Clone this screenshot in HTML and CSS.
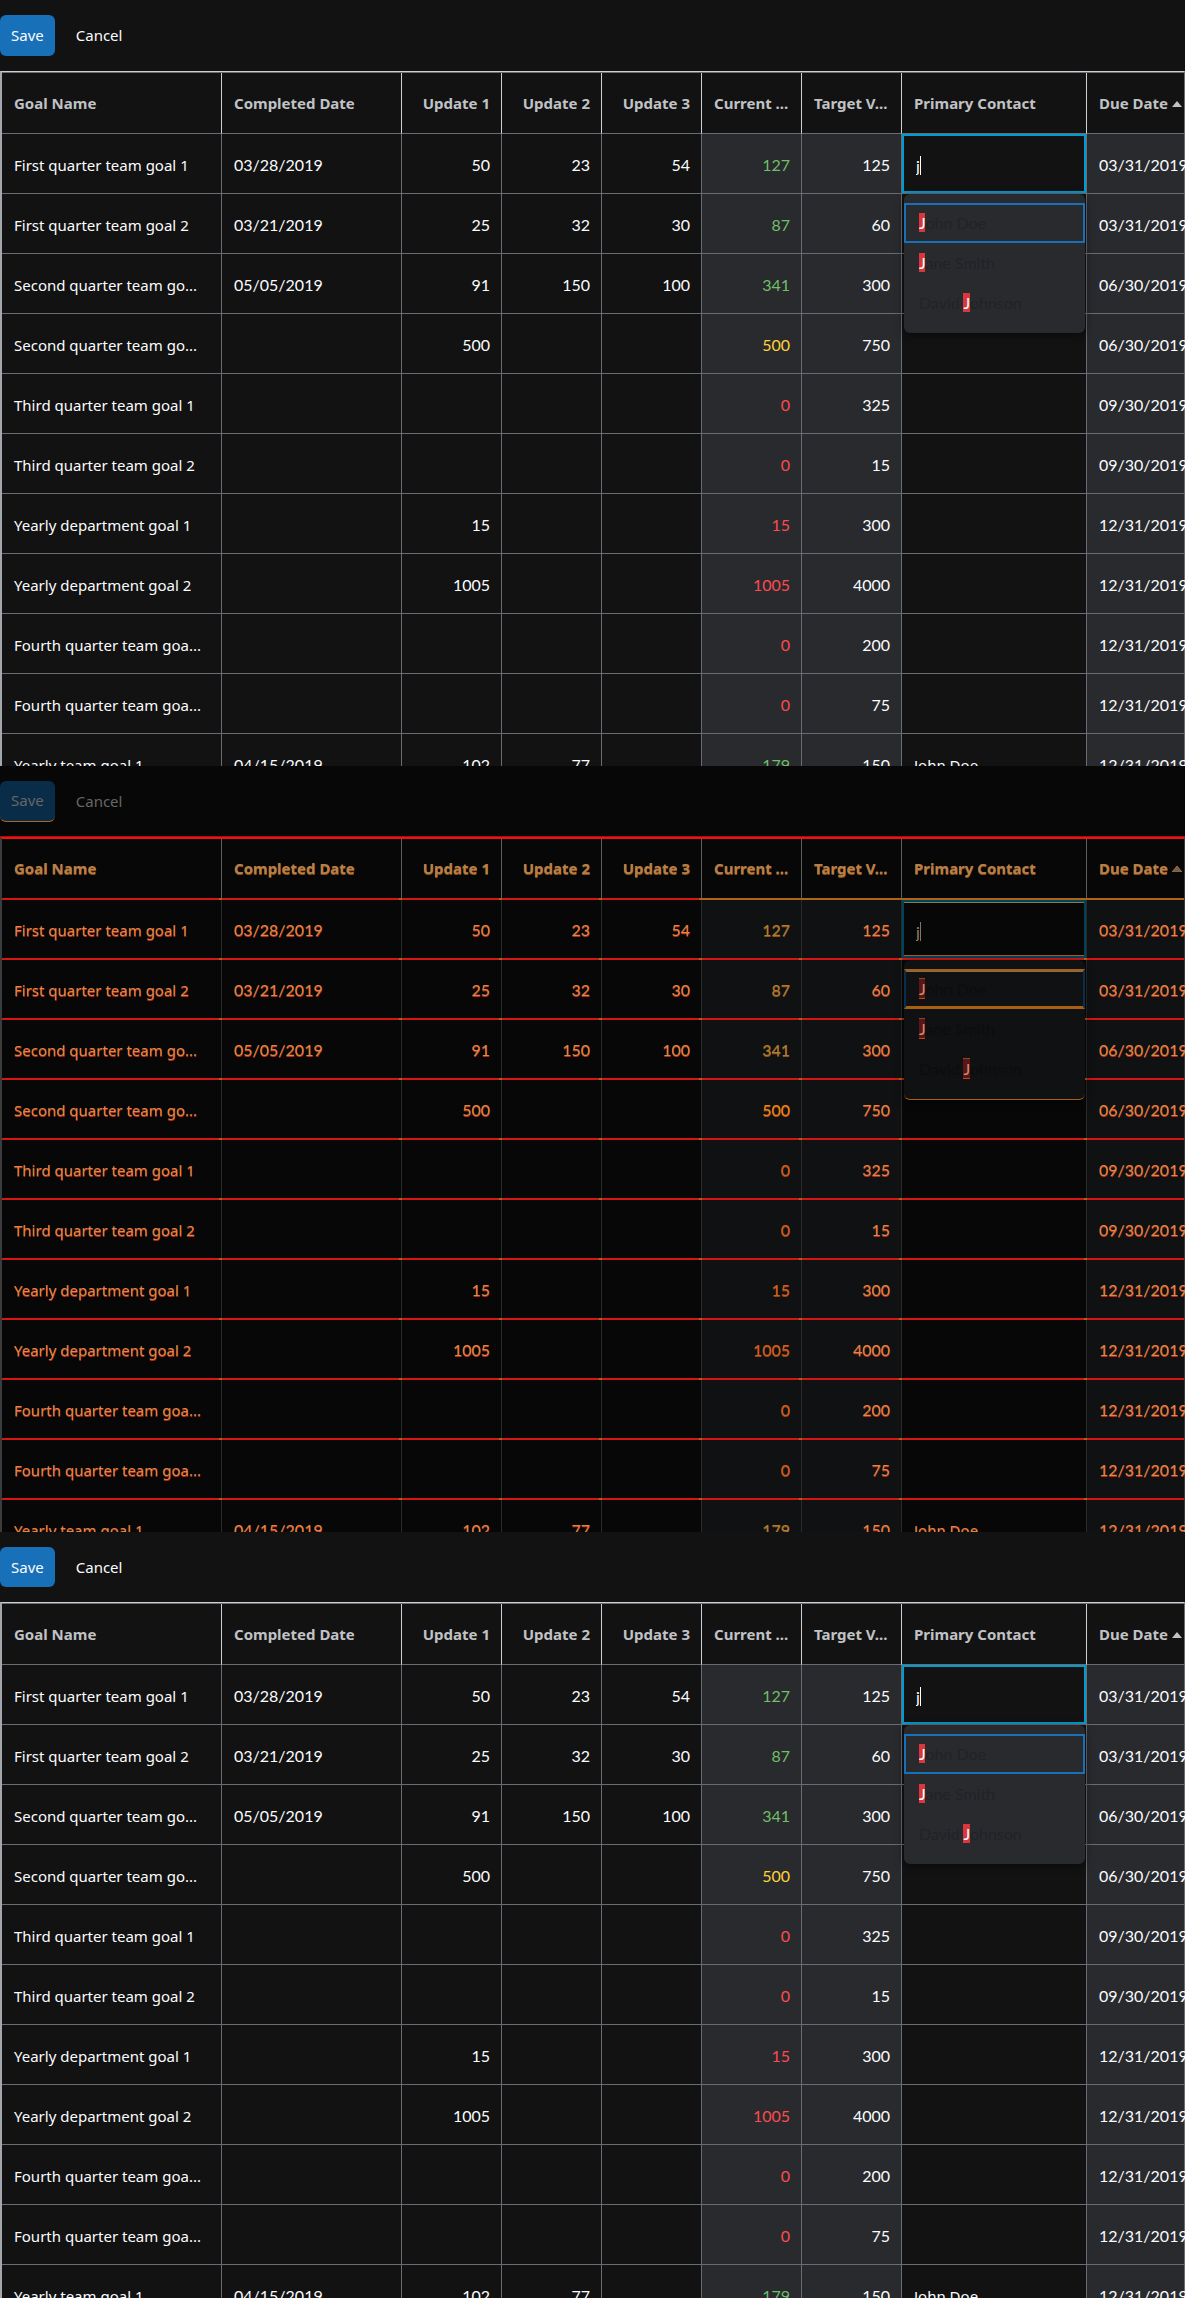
FILE: index.html
```
<!DOCTYPE html>
<html lang="en">
<head>
<meta charset="utf-8">
<title>Goals</title>
<link rel="stylesheet" href="styles.css">
</head>
<body>
<template id="panel-template">
<section class="panel">
  <div class="toolbar">
    <button class="btn btn-primary" type="button">Save</button>
    <button class="btn btn-link" type="button">Cancel</button>
  </div>
  <table class="grid">
    <colgroup>
      <col class="col-name"><col class="col-date"><col class="col-num"><col class="col-num"><col class="col-num"><col class="col-num"><col class="col-num"><col class="col-contact"><col>
    </colgroup>
    <thead>
      <tr>
        <th>Goal Name</th><th>Completed Date</th><th class="num">Update 1</th><th class="num">Update 2</th><th class="num">Update 3</th><th class="over-locked">Current ...</th><th class="over-locked">Target V...</th><th class="over-locked">Primary Contact</th><th class="over-locked due">Due Date <svg class="sort" viewBox="0 0 10 6" aria-hidden="true"><path d="M0 6 5 0l5 6z"/></svg></th>
      </tr>
    </thead>
    <tbody></tbody>
  </table>
</section>
</template>
<main class="panels"></main>
<script src="grid.js"></script>
</body>
</html>
```
FILE: grid.js
```
const rows = [
  ['First quarter team goal 1', '03/28/2019', 50, 23, 54, 127, 125, '', '03/31/2019', 'good'],
  ['First quarter team goal 2', '03/21/2019', 25, 32, 30, 87, 60, '', '03/31/2019', 'good'],
  ['Second quarter team go...', '05/05/2019', 91, 150, 100, 341, 300, '', '06/30/2019', 'good'],
  ['Second quarter team go...', '', 500, '', '', 500, 750, '', '06/30/2019', 'warn'],
  ['Third quarter team goal 1', '', '', '', '', 0, 325, '', '09/30/2019', 'bad'],
  ['Third quarter team goal 2', '', '', '', '', 0, 15, '', '09/30/2019', 'bad'],
  ['Yearly department goal 1', '', 15, '', '', 15, 300, '', '12/31/2019', 'bad'],
  ['Yearly department goal 2', '', 1005, '', '', 1005, 4000, '', '12/31/2019', 'bad'],
  ['Fourth quarter team goa...', '', '', '', '', 0, 200, '', '12/31/2019', 'bad'],
  ['Fourth quarter team goa...', '', '', '', '', 0, 75, '', '12/31/2019', 'bad'],
  ['Yearly team goal 1', '04/15/2019', 102, 77, '', 179, 150, 'John Doe', '12/31/2019', 'good']
];
const editor = `<input class="editor" type="text" value="j" aria-label="Primary Contact"><span class="caret"></span>
  <div class="menu" role="listbox">
    <div class="option active" role="option"><mark>J</mark>ohn Doe</div>
    <div class="option" role="option"><mark>J</mark>ane Smith</div>
    <div class="option" role="option">David <mark>J</mark>ohnson</div>
  </div>`;
const body = rows.map((r, i) => '<tr>' + r.slice(0, 9).map((v, c) => {
  const cls = [];
  if (c >= 2 && c <= 6) cls.push('num');
  if (c === 1 || c === 8) cls.push('date');
  if (c === 5 || c === 6 || c === 8) cls.push('locked');
  if (c === 5) cls.push(r[9]);
  if (c === 8) cls.push('due');
  const editing = i === 0 && c === 7;
  if (editing) cls.push('editing');
  return `<td class="${cls.join(' ')}">${editing ? editor : v}</td>`;
}).join('') + '</tr>').join('');
const main = document.querySelector('.panels');
const template = document.getElementById('panel-template');
['before', 'diff', 'after'].forEach(kind => {
  const panel = template.content.cloneNode(true).firstElementChild;
  panel.classList.add(kind);
  panel.querySelector('tbody').innerHTML = body;
  main.append(panel);
});
```
FILE: styles.css
```
* { box-sizing: border-box; }
body {
  margin: 0;
  background: #121212;
  color: #fbfcfe;
  font: 15px/20px "Noto Sans", "Open Sans", sans-serif;
}
.panels {
  display: grid;
  grid-template-rows: repeat(3, minmax(0, 1fr));
  height: 100vh;
}
.panel { overflow: hidden; background: #121212; }
.toolbar { display: flex; gap: 10px; padding: 15px 0; }
.btn {
  height: 41px;
  padding: 0 11px 2px;
  border: 0;
  border-radius: 6px;
  font: inherit;
  color: inherit;
  background: none;
}
.btn-primary { background: #1870b8; }
.after .btn { height: 40px; padding-bottom: 1px; }
.grid {
  width: 100%;
  table-layout: fixed;
  border-collapse: separate;
  border-spacing: 0;
  border: 1px solid #686c73;
  border-top-color: #cdcfd2;
  box-shadow: inset 0 1px #686c73;
  border-left: 2px solid #a3a7ac;
  padding-top: 1px;
}
.col-name { width: 220px; }
.col-date { width: 180px; }
.col-num { width: 100px; }
.col-contact { width: 185px; }
th, td {
  height: 60px;
  padding: 2px 11px 0 12px;
  border-right: 1px solid #686c73;
  border-bottom: 1px solid #686c73;
  text-align: left;
  white-space: nowrap;
}
th {
  height: 61px;
  padding-top: 0;
  padding-bottom: 1px;
  border-right-color: #cdcfd2;
  color: #c0c2c5;
}
th:last-child, td:last-child { border-right: 0; }
.num { text-align: right; }
td.num, .date, .editing { font-family: Lato, "Noto Sans", sans-serif; font-size: 16px; }
.due { padding-right: 0; }
.sort { width: 10px; height: 6px; fill: currentColor; vertical-align: 2px; }
.locked { background: #282a2e; }
.good { color: #72bf66; }
.warn { color: #ffd13b; }
.bad { color: #ff4a4e; }
.editing { position: relative; padding: 0; }
.editor {
  display: block;
  width: 100%;
  height: 59px;
  padding: 4px 12px 0;
  border: 2px solid #009cd1;
  background: #121212;
  color: inherit;
  font: inherit;
  outline: 0;
}
.caret {
  position: absolute;
  left: 18px;
  top: 22px;
  width: 1px;
  height: 19px;
  background: #ffffff;
}
.menu {
  position: absolute;
  z-index: 1;
  top: 60px;
  left: 2px;
  right: 1px;
  padding: 9px 0 10px;
  border-radius: 6px;
  background: #282a2e;
  box-shadow: 0 2px 8px rgba(0, 0, 0, .5);
  color: #212327;
}
.option { height: 40px; padding: 10px 15px; }
.option.active { padding: 8px 13px; border: 2px solid #1870b8; }
mark { background: #da373c; color: #ffffff; }

/* Difference view: dark surfaces with changed edges picked out */
.diff { background: #070707; color: #666666; }
.diff .btn-primary { background: #092c48; border-bottom: 1px solid #a86828; }
.diff .grid {
  border-color: #e01818 #3a3c3e #3a3c3e #3a3c3e;
  box-shadow: inset 0 1px #e01818, 0 -1px #c80000;
}
.diff td, .diff th {
  position: relative;
  border-right-color: #292a2c;
  border-bottom: 2px solid #d81414;
  color: #d88a46;
  text-shadow: 0 1px #c42418;
}
.diff th { border-right-color: #5c5d5e; color: #b88048; text-shadow: 0 1px #8a4c14; }
.diff .over-locked { border-bottom-color: #b0661a; }
.diff th:not(:last-child)::after, .diff td:not(:last-child)::after {
  content: "";
  position: absolute;
  right: -3px;
  bottom: -2px;
  width: 5px;
  height: 2px;
  background: #a5660f;
}
.diff .locked { background: #0f1113; }
.diff .good { color: #b07c30; text-shadow: 0 1px #8c5418; }
.diff .warn { color: #e08a18; text-shadow: 0 1px #c04010; }
.diff .bad { color: #d06020; text-shadow: 0 1px #a04010; }
.diff .sort { fill: #6a625a; stroke: #a8682c; }
.diff .editor {
  height: 58px;
  border-color: #00445c;
  background: #070707;
  box-shadow: inset 0 1px #86784a, inset 0 -1px #a86010;
  color: #9a8064;
}
.diff .caret { background: #777777; }
.diff .menu {
  border-bottom: 1px solid #a86010;
  background: #0f1113;
  color: #0c0d0f;
  text-shadow: none;
}
.diff .option.active {
  border-color: #a86010 #0c2e4c;
  box-shadow: inset 0 1px #7a7058, inset 0 -1px #a86010;
}
.diff mark {
  background: #581618;
  color: #d88a6a;
  box-shadow: 0 -1px #a04018, 0 1px #c04818;
}
```
